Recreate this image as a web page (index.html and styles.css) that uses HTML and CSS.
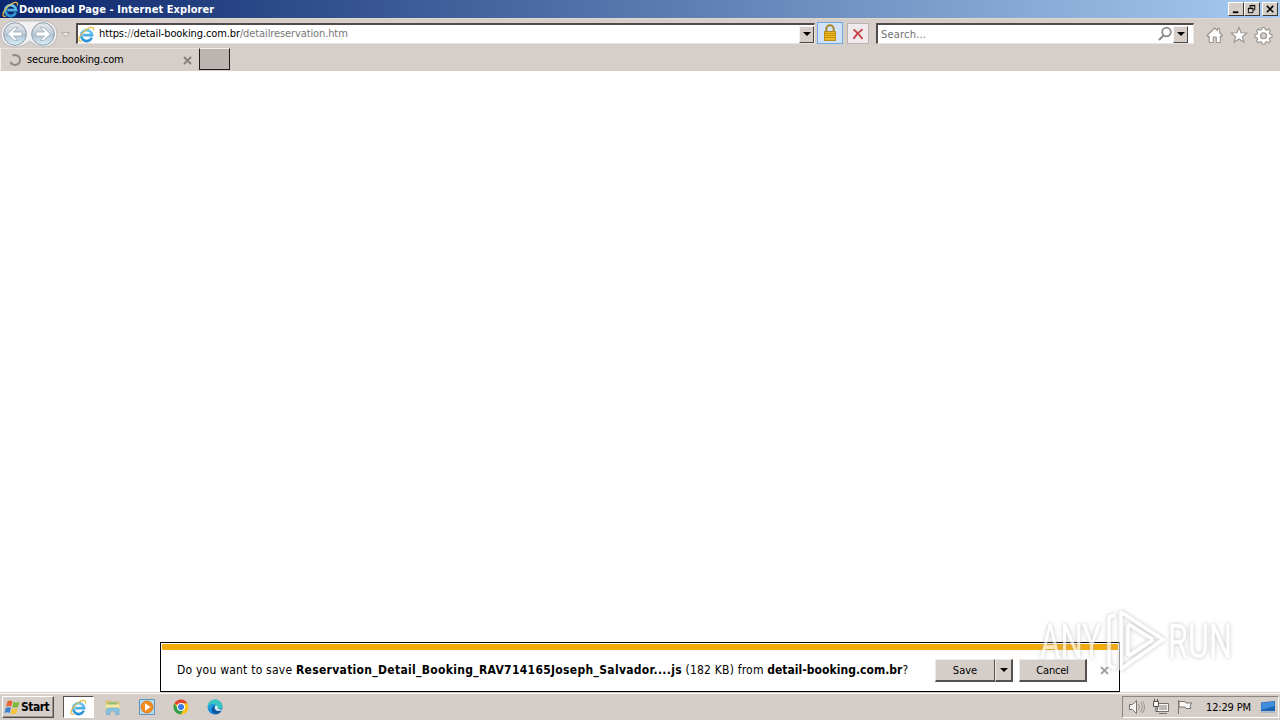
FILE: index.html
```html
<!DOCTYPE html>
<html lang="en">
<head>
<meta charset="utf-8">
<title>Download Page - Internet Explorer</title>
<link rel="stylesheet" href="styles.css">
</head>
<body>
<svg class="defs" aria-hidden="true">
  <defs>
    <linearGradient id="blue" x1="0" y1="0" x2="0" y2="1"><stop offset="0" stop-color="#6fc8f2"/><stop offset="1" stop-color="#2a90d6"/></linearGradient>
    <linearGradient id="nav" x1="0" y1="0" x2="0" y2="1"><stop offset="0" stop-color="#e6e8ea"/><stop offset=".48" stop-color="#c3ced8"/><stop offset=".52" stop-color="#adc1d2"/><stop offset="1" stop-color="#dcf1fc"/></linearGradient>
    <linearGradient id="edge" x1="0" y1="0" x2="1" y2="1"><stop offset="0" stop-color="#36c2dc"/><stop offset=".5" stop-color="#1687d8"/><stop offset="1" stop-color="#0c57a6"/></linearGradient>
    <symbol id="ie" viewBox="0 0 18 18">
      <path d="M14.600 12.300A5.800 5.800 0 1 1 15 9.600H5.500" fill="none" stroke="url(#blue)" stroke-width="2.800"/>
      <path d="M4 16C-.5 17.500 0 11.500 6 6.200S17.500-.5 16.300 4.800" fill="none" stroke="#e9bb45" stroke-width="1.300"/>
    </symbol>
  </defs>
</svg>
<div class="screen">
  <header class="titlebar">
    <svg class="title-ie"><use href="#ie"/></svg>
    <span class="title">Download Page - Internet Explorer</span>
    <div class="winbtns">
      <span class="wb"><svg viewBox="0 0 14 12"><path d="M3 9h6" stroke="#000" stroke-width="2"/></svg></span>
      <span class="wb gap"><svg viewBox="0 0 14 12"><path d="M4.500 4V1.500h5v5H8M4 2h6M2.500 4.500h5v5h-5zM2 5h6" fill="none" stroke="#000"/></svg></span>
      <span class="wb"><svg viewBox="0 0 14 12"><path d="M3 2l7 7M10 2L3 9" stroke="#000" stroke-width="1.700"/></svg></span>
    </div>
  </header>
  <div class="toolbar">
    <svg class="nav" viewBox="0 0 76 29">
      <path d="M14 2H44A12.500 12.500 0 0 1 44 28Q36 28 29.500 22Q23 28 14 28A12 12 0 0 1 14 2z" fill="#f2f2f3" stroke="#bdbcbc"/>
      <circle cx="15" cy="15" r="11.300" fill="url(#nav)" stroke="#8b9aa8"/>
      <circle cx="43" cy="15" r="11.300" fill="url(#nav)" stroke="#8b9aa8"/>
      <path d="M7.500 15l7-6.500h3.200L13.500 13H22v4h-8.500l4.200 4.500h-3.200z" fill="#fff" stroke="#8fa3b4" stroke-width=".7"/>
      <path d="M50.500 15l-7-6.500h-3.200l4.200 4.500H36v4h8.500l-4.200 4.500h3.200z" fill="#fff" stroke="#8fa3b4" stroke-width=".7"/>
      <path d="M61.500 13.500h8L65.500 18z" fill="#eae7e5" stroke="#b4afac"/>
    </svg>
    <div class="field address">
      <svg class="url-ie"><use href="#ie"/></svg>
      <span class="url"><span class="host">https:</span>//<span class="host">detail-booking.com.br</span>/detailreservation.htm</span>
      <span class="drop"><i></i></span>
    </div>
    <span class="lock"><svg width="16" height="18" viewBox="0 0 16 18"><path d="M4.300 8V5a3.700 3.700 0 0 1 7.400 0v3" fill="none" stroke="#a9832a" stroke-width="2"/><path d="M2.500 7.500h11v9h-11z" fill="#edba22" stroke="#b58a1c"/><path d="M2 9.500h12M2 11.500h12M2 13.500h12" stroke="#c7930f"/></svg></span>
    <span class="stop"><svg width="12" height="12" viewBox="0 0 12 12"><path d="M1.500 1.500Q5 4 10.500 10.800M10.500 1.200Q5 5 1.500 10.800" fill="none" stroke="#c9434a" stroke-width="1.900"/></svg></span>
    <div class="field search">
      <span class="placeholder">Search...</span>
      <svg class="mag" width="16" height="16" viewBox="0 0 16 16"><circle cx="9.500" cy="6" r="4.300" fill="none" stroke="#8a8a8a" stroke-width="1.800"/><path d="M6.500 9.500L2 14" stroke="#8a8a8a" stroke-width="2.200"/></svg>
      <span class="drop"><i></i></span>
    </div>
    <svg class="tools" viewBox="0 0 72 20">
      <g fill="#fff" stroke="#98948f" stroke-width="1.100" stroke-linejoin="round">
        <path d="M1 10.500L8.700 3l2.800 2.600V3.500h2v4L16.500 10.500l-1.200 1.300-1-.8V17.500h-4V12H7.200v5.500h-4V11l-1 .8z"/>
        <path d="M33 2.200l2 5.600 6 .2-4.700 3.600 1.700 5.700-5-3.300-5 3.300 1.700-5.700L25 8l6-.2z"/>
        <path d="M56.200 2.500h2.600l.5 2 1.500.7 1.900-1.200 1.700 1.800-1.100 1.900.6 1.400 2.100.5v2.600l-2.100.5-.6 1.400 1.100 1.900-1.700 1.800-1.900-1.200-1.500.7-.5 2h-2.600l-.5-2-1.500-.7-1.900 1.200-1.700-1.800 1.100-1.900-.6-1.400-2.100-.5V9.600l2.100-.5.6-1.400-1.100-1.900L52.300 4l1.900 1.200 1.500-.7z"/>
        <circle cx="57.500" cy="10.700" r="3" fill="#d5cec9"/>
      </g>
    </svg>
  </div>
  <div class="tabs">
    <div class="tab">
      <svg class="spin" width="14" height="14" viewBox="0 0 14 14"><path d="M4.500 2.700A5 5 0 1 1 2.500 9" fill="none" stroke="#8e8a87" stroke-width="2"/></svg>
      <span class="tabname">secure.booking.com</span>
      <svg class="x" viewBox="0 0 9 9"><path d="M1 1l7 7M8 1L1 8" stroke="#85807d" stroke-width="1.800"/></svg>
    </div>
    <span class="newtab"></span>
  </div>
  <main class="page">
    <div class="notice">
      <div class="stripe"></div>
      <div class="row">
        <p class="msg"><span class="m1">Do you want to save </span><b class="m2">Reservation_Detail_Booking_RAV714165Joseph_Salvador....js</b><span class="m3"> (182 KB) from </span><b class="m4">detail-booking.com.br</b><span>?</span></p>
        <span class="btn save">Save</span><span class="btn more"><i></i></span><span class="btn cancel">Cancel</span>
        <svg class="x close" viewBox="0 0 9 9"><path d="M1 1l7 7M8 1L1 8" stroke="#999" stroke-width="1.800"/></svg>
      </div>
    </div>
  </main>
  <footer class="taskbar">
    <span class="start"><svg width="17" height="17" viewBox="0 0 17 17"><path d="M3.500 2.500Q6 .7 8.500 2.200L7.200 7.500Q4.500 6.200 2 7.800z" fill="#e86434"/><path d="M9.500 2.700Q12 4.300 15.500 2.500L14 8Q11 9.500 8.200 8z" fill="#7fb83c"/><path d="M1.700 9Q4.500 7.500 7 8.800L5.700 14Q3.500 12.500.5 14z" fill="#3b83cc"/><path d="M8 9.300Q10.500 11 13.700 9.200L12.300 14.500Q9.500 16 6.700 14.500z" fill="#f5c43c"/></svg><b>Start</b></span>
    <span class="active"><svg class="task-ie"><use href="#ie"/></svg></span>
    <svg class="app" viewBox="0 0 18 18"><path d="M2 3h5l1 1h7v7H2z" fill="#e7cb70" stroke="#c7ac58" stroke-width=".6"/><path d="M4 4.500h9v3H4z" fill="#87bd83"/><path d="M1.500 6.500h14V11h-14z" fill="#f7e8a2"/><path d="M2.500 16.500v-5.300Q2.500 10 4 10h9.500q1.500 0 1.500 1.200v5.300h-3.500V13H6v3.500z" fill="#8ac5e2" stroke="#62a5c9" stroke-width=".6"/></svg>
    <svg class="app" viewBox="0 0 18 18"><path d="M1.500 1.500h15v15h-15z" fill="#b8dbed" stroke="#5696bf"/><circle cx="9" cy="9" r="6" fill="#f38b1d" stroke="#d76a0c" stroke-width=".7"/><path d="M7 5.300L12.500 9 7 12.700z" fill="#fff"/></svg>
    <svg class="app" viewBox="0 0 18 18"><circle cx="9" cy="9" r="7.500" fill="#fbc316"/><path d="M9 9L2.500 5.200A7.500 7.500 0 0 1 15.500 5.300H9z" fill="#e24335"/><path d="M2.500 5.200A7.500 7.500 0 0 0 8.600 16.500L12 11 9 9 5.700 10.600z" fill="#2f9f50"/><circle cx="9" cy="9" r="4" fill="#fff"/><circle cx="9" cy="9" r="3" fill="#3978e5"/></svg>
    <svg class="app" viewBox="0 0 18 18"><circle cx="9" cy="9" r="7.500" fill="url(#edge)"/><path d="M3 4.500Q8-.5 13.500 3q3.500 3 2.800 6.500-1.200 2-4.800 1.500 0-4.500-4-5Q4 5.800 1.700 8z" fill="#38c6c2"/><path d="M9 7.500q-2 2 .2 4.500 2.500 2.300 6.300.3Q13 17 9 15.500 4 13 7 8.500z" fill="#0d5499"/><path d="M9.300 7.500q3.500 0 2.200 3.200 2.500 1.300 4.800.2l-.9 1.700Q10.500 14 8.700 10.500z" fill="#dcecf0"/></svg>
    <div class="tray">
      <svg width="70" height="18" viewBox="0 0 70 18"><g fill="#f8f7f6" stroke="#77726e">
        <path d="M2.500 6.500h3l4-4v13l-4-4h-3z"/><path d="M11.500 6q2 3 0 6M13.500 4q3.500 5 0 10M15.500 3q4 6 0 12" fill="none" stroke="#96918d" stroke-width=".9"/>
        <path d="M30.500 5.500h11v8h-11zM32 15.500h8"/><path d="M32 7h8v5h-8z" fill="#bcb8b5" stroke="none"/><path d="M26.500 3.500h5v5h-5zM27.500 1v2M30.500 1v2M29 9v4.500h2" stroke="#55504c"/>
        <path d="M51.500 2v14"/><path d="M52 3.500h6l1 1.500h6l-2 3 1 2.500h-5l-1-1.500h-6z"/></g></svg>
      <span class="clock">12:29 PM</span>
      <svg width="16" height="14" viewBox="0 0 16 14"><path d="M1 2.500L15 1v10H1z" fill="#1d63b5"/><path d="M1.500 3L14.500 1.600V6L1.500 10z" fill="#3f8ddb"/><path d="M1 12h14" stroke="#85a4c3"/></svg>
    </div>
  </footer>
  <svg class="mark" viewBox="0 0 230 80">
    <g class="shade"><text x="10" y="53" textLength="61" lengthAdjust="spacingAndGlyphs">ANY</text><text x="138" y="53" textLength="64" lengthAdjust="spacingAndGlyphs">RUN</text>
    <path d="M85 10l-6 2v48l6 4M91 7l42 27.500L91 64zM98 19l25 15.500M98 51l25-16M98 20v31" fill="none" stroke="#fff" stroke-width="3.500" stroke-linejoin="round"/></g>
  </svg>
</div>
</body>
</html>
```

FILE: styles.css
```css
* { box-sizing: border-box; }
body { margin: 0; font: 11px/14px "DejaVu Sans Condensed", "DejaVu Sans", sans-serif; color: #000; }
svg { display: block; flex: none; }
.defs { position: absolute; width: 0; height: 0; }
.screen { position: relative; width: 1280px; height: 720px; display: flex; flex-direction: column; overflow: hidden; background: #fff; }
.screen span { white-space: nowrap; }

.titlebar { height: 18px; flex: none; display: flex; align-items: center; padding: 0 2px; background: linear-gradient(90deg, #0b266c, #a6caf0); }
.title-ie { width: 17px; height: 17px; }
.title { color: #fff; font-weight: bold; letter-spacing: .07px; padding-top: 1px; }
.winbtns { margin-left: auto; display: flex; }
.wb { width: 16px; height: 14px; padding: 1px; background: #d5cec8; border: 1px solid; border-color: #fff #3c3939 #3c3939 #fff; }
.wb svg { width: 13px; height: 11px; }
.gap { margin-right: 2px; }

.toolbar { height: 30px; flex: none; display: flex; align-items: flex-start; background: #d5cec9; border-top: 1px solid #dcd7cf; }
.nav { width: 76px; height: 29px; }
.field { margin-top: 4px; height: 21px; display: flex; align-items: center; background: #fff; border: solid; border-width: 2px 1px 1px 2px; border-color: #514b4b #e9e5e2 #e9e5e2 #514b4b; }
.address { width: 739px; }
.url-ie { width: 17px; height: 17px; margin: 0 4px 0 0; }
.url { color: #777; letter-spacing: -.11px; }
.host { color: #000; }
.drop { margin-left: auto; width: 15px; height: 17px; display: flex; align-items: center; justify-content: center; background: #d5cec8; border: 1px solid; border-color: #f6f4f2 #4b4646 #4b4646 #f6f4f2; }
i { border: 4px solid transparent; border-top-color: #000; border-bottom: 0; }
.lock { width: 26px; height: 22px; margin: 3px 0 0 2px; display: flex; align-items: center; justify-content: center; background: #cfe2f7; border: 1px solid #70a9e5; }
.stop { width: 22px; height: 21px; margin: 4px 7px 0 4px; display: flex; align-items: center; justify-content: center; background: #eee9eb; border: 1px solid #b9b3b3; }
.search { width: 318px; padding: 0 5px 0 3px; }
.placeholder { color: #707070; letter-spacing: .2px; padding-top: 1px; }
.mag { margin-left: auto; }
.search .drop { margin-left: 0; }
.tools { width: 72px; height: 20px; margin: 6px 0 0 12px; }

.tabs { height: 23px; flex: none; display: flex; background: #d5cec9; }
.tab { width: 199px; height: 23px; display: flex; align-items: center; padding: 0 7px 0 7px; border-left: 1px solid #f1eeec; border-top: 1px solid #e7e2df; }
.tabname { margin-left: 5px; letter-spacing: -.18px; }
.x { width: 9px; height: 9px; margin-left: auto; }
.newtab { width: 31px; height: 22px; background: #bcb4b1; border: 1px solid; border-color: #f1eeec #1c1a1a #1c1a1a #1c1a1a; }

.page { flex: 1; display: flex; justify-content: center; align-items: flex-end; }
.notice { width: 960px; height: 50px; padding: 1px; border: 1px solid #000; background: #fff; }
.stripe { height: 6px; background: #f3ab0b; }
.row { display: flex; align-items: center; height: 40px; padding: 0 9px 0 15px; }
.msg { margin: 0; width: 758px; white-space: pre; font-size: 12px; }
.screen .msg span { white-space: pre; }
.m1 { letter-spacing: .22px; }
.m2 { letter-spacing: .31px; }
.m3 { letter-spacing: .2px; }
.m4 { letter-spacing: .03px; }
.btn { height: 23px; display: flex; align-items: center; justify-content: center; padding-top: 2px; background: #d5cec8; border: solid; border-width: 1px 2px 2px 1px; border-color: #eeebe8 #56514e #56514e #eeebe8; }
.save { width: 60px; border-right-width: 1px; }
.more { width: 18px; margin-right: 6px; padding: 0; }
.cancel { width: 68px; letter-spacing: -.2px; }
.close { opacity: .9; }

.taskbar { height: 28px; flex: none; display: flex; align-items: center; padding: 2px 1px 0 2px; background: #d5cec8; box-shadow: inset 0 1px #d5cec8, inset 0 2px #fff; }
.start { width: 52px; height: 22px; padding-left: 1px; display: flex; align-items: center; border: 1px solid; border-color: #fff #514c49 #514c49 #fff; box-shadow: inset -1px -1px #9b948f; }
.start b { font-size: 12px; letter-spacing: -.5px; }
.active { width: 31px; height: 22px; margin: 0 11px 0 9px; display: flex; align-items: center; justify-content: center; background: #fff; border: 1px solid; border-color: #57524f #fff #fff #57524f; }
.task-ie { width: 17px; height: 17px; }
.app { width: 18px; height: 18px; margin-right: 16px; }
.app:first-of-type { margin-left: -1px; }
.tray { margin-left: auto; width: 157px; height: 22px; display: flex; align-items: center; padding-left: 4px; border: 1px solid; border-color: #8c8581 #fff #fff #8c8581; }
.clock { width: 54px; margin-left: 9px; letter-spacing: -.15px; padding-top: 1px; }

.mark { position: absolute; left: 1030px; top: 605px; width: 230px; height: 80px; overflow: visible; font-family: "Roboto", sans-serif; font-size: 48px; fill: #fff; opacity: .7; pointer-events: none; }
.shade { filter: drop-shadow(0 0 2px #aaa); }
```
